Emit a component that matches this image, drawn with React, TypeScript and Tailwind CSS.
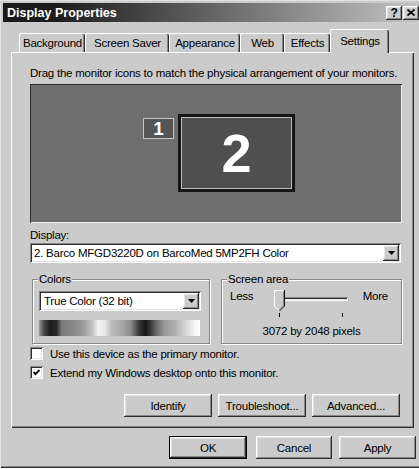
import type { ReactNode } from "react";

// classic 3D bevels
const raised =
  "shadow-[inset_-1px_-1px_0_#2e2e2e,inset_1px_1px_0_#ffffff,inset_-2px_-2px_0_#878787,inset_2px_2px_0_#e2e2e2]";
const sunken =
  "shadow-[inset_1px_1px_0_#878787,inset_-1px_-1px_0_#ffffff,inset_2px_2px_0_#2e2e2e,inset_-2px_-2px_0_#e2e2e2]";

const ArrowDown = () => (
  <svg width="7" height="4" viewBox="0 0 7 4">
    <path d="M0 0h7L3.5 4z" fill="#000" />
  </svg>
);

const DropButton = () => (
  <span className={`w-[16px] h-[16px] bg-[#cbcbcb] flex items-center justify-center ${raised}`}>
    <ArrowDown />
  </span>
);

const Button = ({ children, className = "" }: { children: ReactNode; className?: string }) => (
  <button
    type="button"
    className={`h-[23px] flex items-center justify-center bg-[#cbcbcb] ${raised} ${className}`}
  >
    {children}
  </button>
);

const Checkbox = ({ checked, label }: { checked?: boolean; label: string }) => (
  <div className="flex items-center h-[13px]">
    <span className={`w-[13px] h-[13px] bg-white flex items-center justify-center ${sunken}`}>
      {checked && (
        <svg width="7" height="7" viewBox="0 0 7 7">
          <path d="M0.5 3l2 2.2L6.5 1" stroke="#000" strokeWidth="1.9" fill="none" />
        </svg>
      )}
    </span>
    <span className="ml-[7px]">{label}</span>
  </div>
);

const GroupBox = ({
  title,
  className = "",
  children,
}: {
  title: string;
  className?: string;
  children: ReactNode;
}) => (
  <div
    className={`relative h-[65px] border border-[#878787] shadow-[inset_1px_1px_0_#ffffff,1px_1px_0_#ffffff] ${className}`}
  >
    <span className="absolute -top-[8px] left-[5px] px-[1px] bg-[#cbcbcb] leading-[14px]">{title}</span>
    {children}
  </div>
);

const Tab = ({ label, className = "" }: { label: string; className?: string }) => (
  <div
    className={`h-[19px] flex items-center justify-center border-t border-l border-white rounded-t-[2px] shadow-[inset_-1px_0_0_#2e2e2e,inset_-2px_0_0_#878787] ${className}`}
  >
    {label}
  </div>
);

// resolution slider: thumb, track and two ticks
const Slider = () => (
  <div className="relative w-[77px] h-[30px]">
    <div className={`absolute top-[8px] left-[9px] w-[66px] h-[4px] ${sunken}`} />
    <svg className="absolute top-[1px] left-[1px]" width="11" height="22" viewBox="0 0 11 22">
      <path d="M0.5 0.5H10.5V16L5.5 21L0.5 16Z" fill="#cbcbcb" />
      <path d="M0.5 16V0.5H10" stroke="#fff" fill="none" />
      <path d="M0.5 16L5 20.5" stroke="#fff" fill="none" />
      <path d="M10.5 0V16L5.5 21" stroke="#111" fill="none" />
      <path d="M9.5 1.5V15.5L5.5 19.5" stroke="#878787" fill="none" />
    </svg>
    <div className="absolute top-[24px] left-[6px] w-[1px] h-[4px] bg-black" />
    <div className="absolute top-[24px] left-[69px] w-[1px] h-[4px] bg-black" />
  </div>
);

export default function App() {
  return (
    <div className="w-[419px] h-[469px] bg-white overflow-hidden font-['Liberation_Sans',Arial,sans-serif] text-[11.5px] leading-[14px] tracking-[-0.23px] text-black">
      <div className="w-[426px] h-[468px] bg-[#cbcbcb] flex flex-col pt-[3px] shadow-[inset_1px_1px_0_#e2e2e2,inset_-1px_-1px_0_#2e2e2e,inset_-2px_-2px_0_#878787]">
        {/* title bar */}
        <div className="mx-[3px] h-[19px] flex items-center pl-[4px] bg-[linear-gradient(to_right,#1b1b1b_12%,#c6c6c6_100%)]">
          <span className="text-white font-bold text-[12.5px] tracking-[0px]">Display Properties</span>
          <div className="ml-auto mr-[4px] flex gap-[1px]">
            <span className={`w-[16px] h-[14px] bg-[#cbcbcb] flex items-center justify-center font-bold text-[12px] ${raised}`}>
              ?
            </span>
            <span className={`w-[16px] h-[14px] bg-[#cbcbcb] flex items-center justify-center ${raised}`}>
              <svg width="8" height="7" viewBox="0 0 8 7">
                <path d="M0.5 0.5L7.5 6.5M7.5 0.5L0.5 6.5" stroke="#000" strokeWidth="1.6" />
              </svg>
            </span>
          </div>
        </div>

        {/* tabs */}
        <div className="mt-[7px] h-[23px] pl-[19px] flex items-end">
          <Tab label="Background" className="w-[66px]" />
          <Tab label="Screen Saver" className="w-[84px]" />
          <Tab label="Appearance" className="w-[71px]" />
          <Tab label="Web" className="w-[44px]" />
          <Tab label="Effects" className="w-[46px]" />
          <div className="relative z-10 -mb-[1px] w-[59px] h-[24px] flex justify-center pt-[4px] bg-[#cbcbcb] border-t border-l border-white rounded-t-[2px] shadow-[inset_-1px_0_0_#2e2e2e,inset_-2px_0_0_#878787]">
            Settings
          </div>
        </div>

        {/* settings page */}
        <div className="ml-[11px] w-[403px] h-[376px] flex flex-col pt-[13px] pl-[18px] border-t border-l border-white shadow-[inset_-1px_-1px_0_#2e2e2e,inset_-2px_-2px_0_#878787]">
          <p>Drag the monitor icons to match the physical arrangement of your monitors.</p>

          <div className="relative mt-[4px] w-[372px] h-[139px] bg-[#6e6e6e] shadow-[inset_1px_1px_0_#2e2e2e,inset_-1px_-1px_0_#f0f0f0]">
            <div className="absolute left-[113px] top-[34px] w-[31px] h-[21px] bg-[#555555] border border-[#c4c4c4] flex items-center justify-center text-white font-bold text-[19px] tracking-[0px]">
              1
            </div>
            <div className="absolute left-[148px] top-[30px] w-[117px] h-[78px] bg-[#161616] p-[3px]">
              <div className="w-full h-full bg-[#4f4f4f] border border-[#bdbdbd] flex items-center justify-center text-white font-bold text-[54px] leading-none tracking-[0px]">
                2
              </div>
            </div>
          </div>

          <p className="mt-[5px]">Display:</p>
          <div className={`mt-[1px] w-[371px] h-[20px] bg-white flex items-center pl-[4px] pr-[2px] ${sunken}`}>
            <span>2. Barco MFGD3220D on BarcoMed 5MP2FH Color</span>
            <span className="ml-auto">
              <DropButton />
            </span>
          </div>

          <div className="mt-[16px] ml-[2px] flex gap-[11px]">
            <GroupBox title="Colors" className="w-[178px] pt-[11px] pl-[6px]">
              <div className={`w-[162px] h-[20px] bg-white flex items-center pl-[5px] pr-[2px] ${sunken}`}>
                <span>True Color (32 bit)</span>
                <span className="ml-auto">
                  <DropButton />
                </span>
              </div>
              <div className="mt-[9px] w-[161px] h-[16px] bg-[linear-gradient(to_right,#9a9a9a_0%,#4a4a4a_3%,#1e1e1e_7%,#2a2a2a_11%,#7a7a7a_14%,#8a8a8a_22%,#9e9e9e_28%,#c2c2c2_33%,#f4f4f4_37%,#e6e6e6_41%,#bdbdbd_45%,#a6a6a6_52%,#8a8a8a_57%,#3a3a3a_62%,#161616_66%,#333333_69%,#6a6a6a_73%,#9a9a9a_78%,#acacac_84%,#d4d4d4_91%,#f6f6f6_97%,#ffffff_100%)]" />
            </GroupBox>

            <GroupBox title="Screen area" className="w-[181px]">
              <div className="flex pt-[9px] pl-[8px] pr-[13px]">
                <span className="w-[43px]">Less</span>
                <Slider />
                <span className="ml-auto">More</span>
              </div>
              <p className="mt-[5px] text-center">3072 by 2048 pixels</p>
            </GroupBox>
          </div>

          <div className="mt-[3px] flex flex-col gap-[6px]">
            <Checkbox label="Use this device as the primary monitor." />
            <Checkbox checked label="Extend my Windows desktop onto this monitor." />
          </div>

          <div className="mt-[15px] pl-[94px] flex gap-[6px]">
            <Button className="w-[88px]">Identify</Button>
            <Button className="w-[88px]">Troubleshoot...</Button>
            <Button className="w-[88px]">Advanced...</Button>
          </div>
        </div>

        {/* dialog buttons */}
        <div className="mt-[8px] pl-[169px] flex">
          <div className="w-[78px] h-[23px] border border-black">
            <Button className="w-full h-full">OK</Button>
          </div>
          <Button className="ml-[9px] w-[76px]">Cancel</Button>
          <Button className="ml-[7px] w-[77px]">Apply</Button>
        </div>
      </div>
    </div>
  );
}
